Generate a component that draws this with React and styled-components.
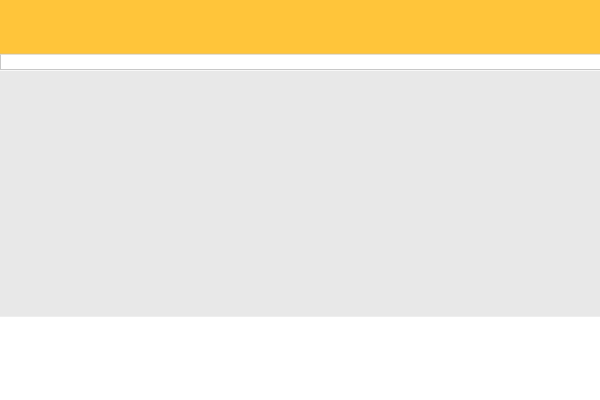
import React from "react";
import styled, { createGlobalStyle } from "styled-components";

const GlobalStyle = createGlobalStyle`
  body {
    margin: 0;
    background: #ffffff;
    font-family: "Liberation Sans", Arial, sans-serif;
  }
`;

const Page = styled.div`
  display: flex;
  flex-direction: column;
`;

const Banner = styled.header`
  height: 53px;
  border-bottom: 1px solid #eec25c;
  background: #ffc53a;
`;

const Strip = styled.div`
  height: 14px;
  border: 1px solid #c8c8c8;
  border-top-color: #e6e0d2;
  border-right: 0;
  background: #ffffff;
`;

const Content = styled.main`
  height: 245px;
  border-top: 1px solid #f8f8f8;
  border-bottom: 1px solid #eeeeee;
  background: #e8e8e8;
`;

export default function App() {
  return (
    <>
      <GlobalStyle />
      <Page>
        <Banner />
        <Strip />
        <Content />
      </Page>
    </>
  );
}
